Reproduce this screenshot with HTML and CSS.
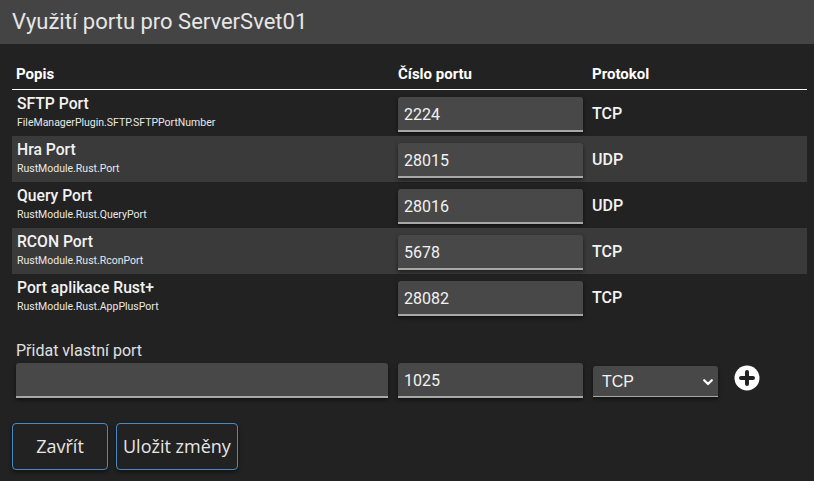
FILE: index.html
```html
<!DOCTYPE html>
<html lang="cs">
<head>
<meta charset="utf-8">
<title>Využití portu</title>
<link rel="stylesheet" href="styles.css">
</head>
<body>
<div class="dialog">
  <header class="titlebar">Využití portu pro ServerSvet01</header>
  <table class="ports">
    <colgroup>
      <col class="c1"><col class="c2"><col class="c3"><col class="c4">
    </colgroup>
    <thead>
      <tr><th>Popis</th><th>Číslo portu</th><th>Protokol</th><th></th></tr>
    </thead>
    <tbody>
      <tr>
        <td class="desc"><div class="name">SFTP Port</div><div class="key">FileManagerPlugin.SFTP.SFTPPortNumber</div></td>
        <td><input class="field" type="text" value="2224"></td>
        <td class="proto">TCP</td><td></td>
      </tr>
      <tr class="alt">
        <td class="desc"><div class="name">Hra Port</div><div class="key">RustModule.Rust.Port</div></td>
        <td><input class="field" type="text" value="28015"></td>
        <td class="proto">UDP</td><td></td>
      </tr>
      <tr>
        <td class="desc"><div class="name">Query Port</div><div class="key">RustModule.Rust.QueryPort</div></td>
        <td><input class="field" type="text" value="28016"></td>
        <td class="proto">UDP</td><td></td>
      </tr>
      <tr class="alt">
        <td class="desc"><div class="name">RCON Port</div><div class="key">RustModule.Rust.RconPort</div></td>
        <td><input class="field" type="text" value="5678"></td>
        <td class="proto">TCP</td><td></td>
      </tr>
      <tr>
        <td class="desc"><div class="name">Port aplikace Rust+</div><div class="key">RustModule.Rust.AppPlusPort</div></td>
        <td><input class="field" type="text" value="28082"></td>
        <td class="proto">TCP</td><td></td>
      </tr>
    </tbody>
  </table>

  <section class="custom">
    <div class="custom-label">Přidat vlastní port</div>
    <div class="custom-row">
      <input class="field wide" type="text" value="">
      <input class="field" type="text" value="1025">
      <div class="select">
        <span>TCP</span>
        <svg class="chev" width="10" height="7" viewBox="0 0 10 7"><path d="M1.2 1.2 L5 5 L8.8 1.2" fill="none" stroke="#fff" stroke-width="2.2" stroke-linecap="round" stroke-linejoin="round"/></svg>
      </div>
      <svg class="plus" width="26" height="26" viewBox="0 0 26 26">
        <circle cx="13" cy="13" r="12.5" fill="#fff"/>
        <path d="M13 7 V19 M7 13 H19" stroke="#222" stroke-width="4" stroke-linecap="round"/>
      </svg>
    </div>
  </section>

  <footer class="actions">
    <button class="btn">Zavřít</button>
    <button class="btn">Uložit změny</button>
  </footer>
</div>
</body>
</html>
```
FILE: styles.css
```css
* { box-sizing: border-box; }
html, body { margin: 0; padding: 0; }
body {
  background: #222222;
  color: #eeeeee;
  font-family: Roboto, "Liberation Sans", sans-serif;
  width: 814px;
  height: 481px;
  overflow: hidden;
}
.titlebar {
  height: 44px;
  background: #444444;
  color: #e6e6e6;
  font-size: 22px;
  line-height: 44px;
  padding-left: 12px;
}
.ports {
  margin: 16px 0 0 12px;
  width: 795px;
  border-collapse: collapse;
  table-layout: fixed;
}
.c1 { width: 382px; }
.c2 { width: 194px; }
.c3 { width: 135px; }
.c4 { width: 84px; }
.ports th {
  text-align: left;
  font-size: 15px;
  font-weight: 700;
  color: #ffffff;
  padding: 5px 4px 0 4px;
  height: 29px;
  vertical-align: top;
  border-bottom: 1px solid #ffffff;
}
.ports td {
  height: 46px;
  padding: 0 4px;
  vertical-align: middle;
}
.ports tr.alt td { background: #3a3a3a; }
.ports td.desc { padding: 4px 5px 6px 5px; vertical-align: top; }
.name { font-size: 15.7px; line-height: 19px; font-weight: 500; color: #f2f2f2; }
.key { font-size: 10.5px; line-height: 14px; margin-top: 3px; color: #e8e8e8; }
.proto { font-size: 16px; font-weight: 500; color: #f2f2f2; padding-top: 1px !important; }
.field {
  display: block;
  width: 185px;
  height: 35px;
  margin-top: 4px;
  background: #484848;
  border: none;
  border-bottom: 2px solid #a8a8a8;
  border-radius: 3px 3px 0 0;
  box-shadow: 0 2px 4px rgba(0,0,0,0.5);
  color: #f2f2f2;
  font-family: Roboto, "Liberation Sans", sans-serif;
  font-size: 16px;
  padding: 2px 6px 0 6px;
  outline: none;
}
.custom { margin: 21px 0 0 16px; }
.custom-label { font-size: 16px; color: #e0e0e0; line-height: 20px; }
.custom-row {
  display: flex;
  align-items: center;
  margin-top: 2px;
}
.custom-row .field { margin-top: 0; }
.custom-row .field.wide { width: 372px; margin-right: 10px; }
.select {
  position: relative;
  width: 125px;
  height: 31px;
  margin-left: 10px;
  margin-top: 2px;
  background: #484848;
  border-bottom: 1px solid #a8a8a8;
  border-radius: 3px 3px 0 0;
  box-shadow: 0 2px 4px rgba(0,0,0,0.5);
  font-family: "Liberation Sans", Arial, sans-serif;
  font-size: 16px;
  color: #f2f2f2;
  line-height: 31px;
  padding-left: 9px;
}
.chev { position: absolute; right: 5px; top: 13px; }
.plus { margin-left: 16px; margin-top: -4px; }
.actions {
  display: flex;
  gap: 8px;
  margin: 25px 0 0 12px;
}
.btn {
  min-width: 96px;
  height: 47px;
  padding: 0 6px;
  background: #222222;
  border: 1px solid #4a8ac0;
  border-radius: 4px;
  color: #e6e6e6;
  font-family: "Open Sans", "Noto Sans", sans-serif;
  font-size: 18px;
  box-shadow: 0 2px 4px rgba(0,0,0,0.5);
}
```
